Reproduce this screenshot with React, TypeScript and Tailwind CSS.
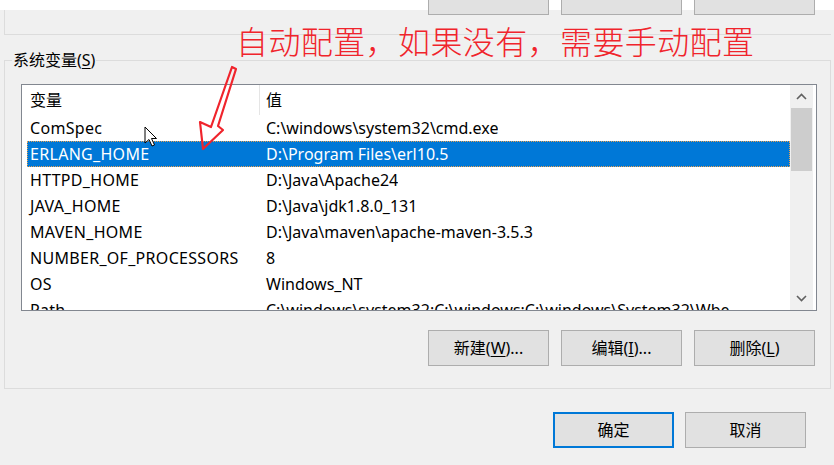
import React from "react";

const rows = [
  { name: "ComSpec", value: "C:\\windows\\system32\\cmd.exe" },
  { name: "ERLANG_HOME", value: "D:\\Program Files\\erl10.5", selected: true },
  { name: "HTTPD_HOME", value: "D:\\Java\\Apache24" },
  { name: "JAVA_HOME", value: "D:\\Java\\jdk1.8.0_131" },
  { name: "MAVEN_HOME", value: "D:\\Java\\maven\\apache-maven-3.5.3" },
  { name: "NUMBER_OF_PROCESSORS", value: "8" },
  { name: "OS", value: "Windows_NT" },
  { name: "Path", value: "C:\\windows\\system32;C:\\windows;C:\\windows\\System32\\Wbem;C:\\windows\\System32\\WindowsPowerShell\\v1.0\\" },
];

const font = "font-['Noto_Sans','Noto_Sans_CJK_SC',sans-serif]";

function Btn({ children, primary }: { children: React.ReactNode; primary?: boolean }) {
  return (
    <div
      className={[
        "w-[121px] h-[36px] flex items-center justify-center bg-[#e1e1e1] text-[16px] text-black",
        primary ? "border-2 border-[#0078d7]" : "border border-[#adadad]",
      ].join(" ")}
    >
      {children}
    </div>
  );
}

function Chevron({ up }: { up?: boolean }) {
  return (
    <svg width="11" height="7" viewBox="0 0 11 7">
      <path
        d={up ? "M1 6 L5.5 1.5 L10 6" : "M1 1 L5.5 5.5 L10 1"}
        fill="none"
        stroke="#606060"
        strokeWidth="1.6"
      />
    </svg>
  );
}

export default function App() {
  return (
    <div className={`relative w-[834px] h-[465px] overflow-hidden bg-[#f0f0f0] ${font}`}>
      {/* cropped top of the previous group */}
      <div className="h-[10px] bg-white" />
      <div className="ml-[4px] w-[827px] h-[25px] border-l border-b border-[#dcdcdc] flex">
        <div className="ml-[423px] -mt-[10px] flex gap-[12px]">
          <div className="w-[121px] h-[15px] bg-[#e1e1e1] border-x border-b border-[#adadad]" />
          <div className="w-[121px] h-[15px] bg-[#e1e1e1] border-x border-b border-[#adadad]" />
          <div className="w-[121px] h-[15px] bg-[#e1e1e1] border-x border-b border-[#adadad]" />
        </div>
      </div>

      {/* 系统变量 group */}
      <fieldset className="ml-[4px] mt-[15px] w-[827px] border border-[#dcdcdc] pb-[22px]">
        <legend className="ml-[7px] px-[1px] text-[16px] leading-[20px] text-black">
          系统变量(<span className="underline underline-offset-2">S</span>)
        </legend>

        <div className="ml-[16px] mt-[14px] w-[796px] h-[227px] border border-[#828790] bg-white flex overflow-hidden">
          <div className="flex-1 flex flex-col overflow-hidden">
            <div className="h-[30px] shrink-0 flex items-center text-[16px] text-black">
              <div className="w-[238px] shrink-0 pl-[8px] h-full flex items-center border-r border-[#e5e5e5]">变量</div>
              <div className="pl-[6px]">值</div>
            </div>
            {rows.map((r) => (
              <div
                key={r.name}
                className={[
                  "ml-[5px] h-[26px] shrink-0 flex items-center text-[16px] whitespace-nowrap",
                  r.selected
                    ? "bg-[#0078d7] text-white outline-1 outline-dotted outline-[#e8a050] -outline-offset-1"
                    : "text-black",
                ].join(" ")}
              >
                <div className="w-[232px] shrink-0 pl-[3px] tracking-[0.3px]">{r.name}</div>
                <div className="pl-[7px] max-w-[490px] overflow-hidden text-ellipsis">{r.value}</div>
              </div>
            ))}
          </div>
          {/* scrollbar */}
          <div className="w-[23px] mr-[3px] bg-[#f0f0f0] flex flex-col">
            <div className="h-[23px] flex items-center justify-center">
              <Chevron up />
            </div>
            <div className="mx-[1px] h-[63px] bg-[#cdcdcd]" />
            <div className="flex-1" />
            <div className="h-[23px] flex items-center justify-center">
              <Chevron />
            </div>
          </div>
        </div>

        <div className="mt-[19px] ml-[423px] flex gap-[12px]">
          <Btn>
            新建(<span className="underline underline-offset-2">W</span>)...
          </Btn>
          <Btn>
            编辑(<span className="underline underline-offset-2">I</span>)...
          </Btn>
          <Btn>
            删除(<span className="underline underline-offset-2">L</span>)
          </Btn>
        </div>
      </fieldset>

      <div className="mt-[23px] ml-[553px] flex gap-[11px]">
        <Btn primary>确定</Btn>
        <Btn>取消</Btn>
      </div>

      {/* red annotation */}
      <div className="absolute left-[236px] top-[21px] text-[32px] tracking-[0.4px] leading-[38px] text-[#f0242c] font-['Noto_Sans_CJK_SC',sans-serif] font-light whitespace-nowrap">
        自动配置，如果没有，需要手动配置
      </div>
      <svg className="absolute left-0 top-0" width="834" height="465" viewBox="0 0 834 465">
        <polygon
          points="232,67 236,69 218,126 223,130 203,149 200,122 211,127"
          fill="none"
          stroke="#f0242c"
          strokeWidth="2.2"
          strokeLinejoin="round"
        />
        {/* mouse cursor */}
        <path
          d="M145 127 L145 143 L149 139.5 L152 146 L154.5 145 L151.5 138.5 L156.5 138.5 Z"
          fill="#fff"
          stroke="#000"
          strokeWidth="1"
        />
      </svg>
    </div>
  );
}
